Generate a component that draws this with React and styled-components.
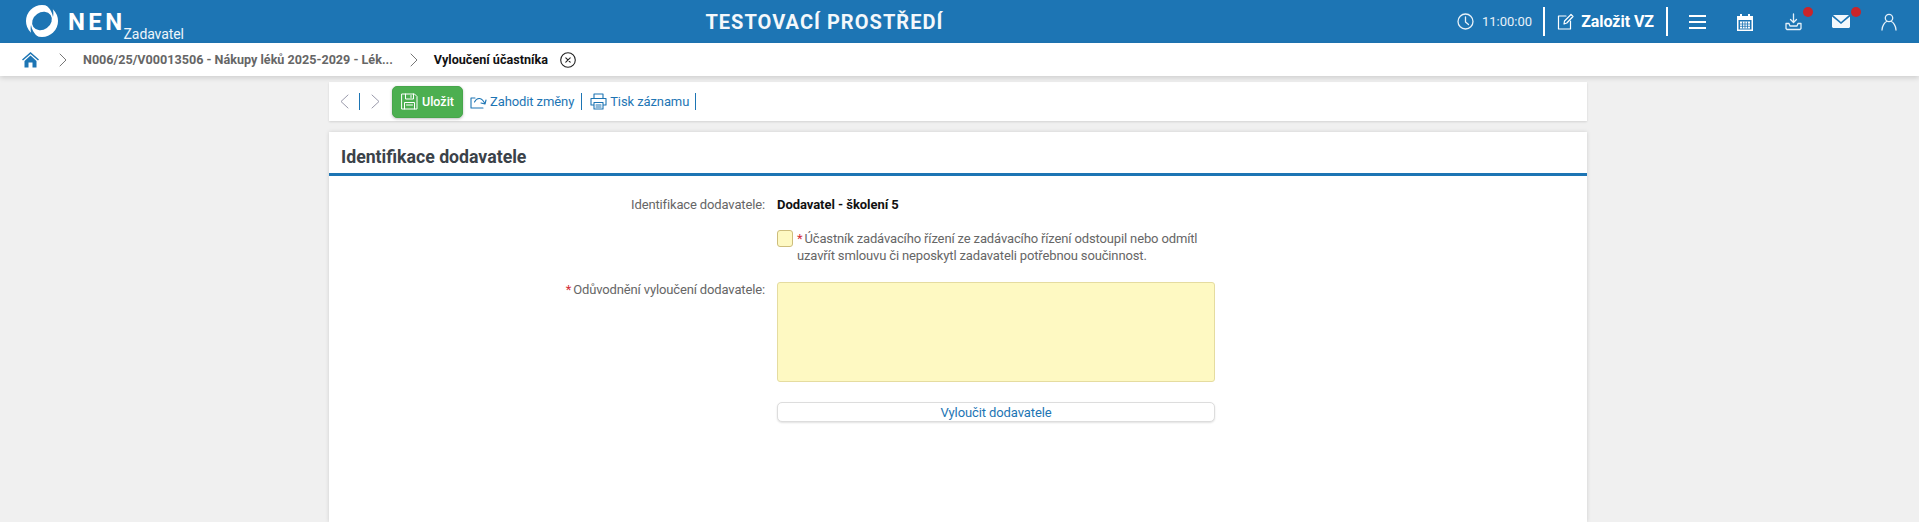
import React from "react";
import styled, { createGlobalStyle } from "styled-components";

const Global = createGlobalStyle`
  html, body { margin: 0; padding: 0; height: 100%; overflow: hidden; background: #f0f0f0; }
  body { font-family: Roboto, "Liberation Sans", sans-serif; font-size: 13px; color: #555; }
  * { box-sizing: border-box; }
`;

const Page = styled.div`display: flex; flex-direction: column; height: 522px; overflow: hidden;`;

const Header = styled.header`
  height: 43px; background: #1d75b4; color: #fff; display: flex; align-items: center;
`;
const Brand = styled.div`display: flex; align-items: flex-start; padding-left: 25px; height: 43px; flex: none;`;
const LogoMark = styled.svg`width: 33px; height: 33px; margin-top: 4px; flex: none;`;
const BrandName = styled.span`
  font-size: 24px; font-weight: 700; letter-spacing: 3.4px; line-height: 26px; margin: 9px 0 0 10px;
`;
const BrandRole = styled.span`font-size: 14px; letter-spacing: -.1px; line-height: 16px; margin: 26px 0 0 -2px; color: #eef5fb;`;
const EnvTitle = styled.div`flex: 1; padding-left: 8px; text-align: center; font-size: 20px; font-weight: 700; letter-spacing: 1.04px; color: #f4f8fb;`;
const HeaderTools = styled.div`display: flex; align-items: center; height: 43px; padding-right: 6px; flex: none;`;
const Clock = styled.div`
  display: flex; align-items: center; gap: 8px; font-size: 13px; padding-right: 11px; height: 29px;
  border-right: 2px solid #fff; color: #e8f1f8;
`;
const Found = styled.div`
  display: flex; align-items: center; gap: 7px; font-size: 16px; font-weight: 700; letter-spacing: -.05px; height: 29px;
  padding: 0 12px 0 12px; margin-right: 5px; border-right: 2px solid #fff;
`;
const ToolIcon = styled.div`
  position: relative; width: 48px; height: 24px; display: flex; align-items: center; justify-content: center;
`;
const Dot = styled.span`
  position: absolute; top: -3px; left: 34px; width: 10px; height: 10px; border-radius: 50%; background: #c9252b;
`;

const Crumbs = styled.nav`
  height: 33px; background: #fff; display: flex; align-items: center; padding-left: 22px;
  box-shadow: 0 2px 5px rgba(0,0,0,.14); position: relative; z-index: 2;
`;
const HomeGap = styled.span`width: 19px;`;
const CrumbLink = styled.span`font-size: 12.6px; font-weight: 700; color: #666; margin: 0 16px 0 15px;`;
const CrumbCurrent = styled.span`font-size: 12.6px; font-weight: 700; color: #111; margin: 0 12px 0 15px;`;
const Chevron = styled.svg`width: 10px; height: 14px; flex: none; color: #777;`;

const Main = styled.main`width: 1258px; margin: 6px 0 0 329px; display: flex; flex-direction: column; gap: 11px; flex: 1;`;
const Toolbar = styled.div`
  height: 39px; background: #fff; display: flex; align-items: center; padding-left: 11px;
  box-shadow: 0 1px 2px rgba(0,0,0,.12);
`;
const NavArrow = styled.div`width: 10px; height: 16px; display: flex; align-items: center; margin-left: ${p => p.$ml || 0};`;
const Sep = styled.span`width: 1px; height: 17px; background: #1d75b4; margin: ${p => p.$m || "0 8px"};`;
const SaveButton = styled.button`
  height: 32px; width: 71px; margin: 0 7px 0 -1px; background: #4caf50; color: #fff; border: 1px solid #47a64b; border-radius: 5px;
  display: flex; align-items: center; gap: 4px; padding: 0 0 0 8px; position: relative;
  font: 500 12.5px Roboto, sans-serif; box-shadow: 0 1px 3px rgba(0,0,0,.25);
`;
const ToolAction = styled.span`display: flex; align-items: center; gap: 3px; color: #1d75b4; font-size: 13px; letter-spacing: -.1px;`;

const Card = styled.section`background: #fff; flex: 1; box-shadow: 0 0 4px rgba(0,0,0,.14);`;
const CardTitle = styled.h2`
  margin: 0; height: 44px; padding: 12px 0 0 12px; border-bottom: 3px solid #1d75b4;
  font-size: 17.7px; font-weight: 700; line-height: 26px; color: #3b4249;
`;
const Form = styled.div`
  display: grid; grid-template-columns: 436px 438px; column-gap: 12px; padding-top: 21px;
`;
const Label = styled.div`text-align: right; color: #666; font-size: 13px; letter-spacing: -.14px; line-height: 16px; margin-top: ${p => p.$mt || 0};`;
const Req = styled.span`color: #d32f3a; margin-right: 2px;`;
const Value = styled.div`font-weight: 700; font-size: 13px; color: #111; line-height: 16px; letter-spacing: -.05px;`;
const CheckRow = styled.div`display: flex; margin-top: 17px; grid-column: 2; line-height: 17px; color: #666; font-size: 13px; letter-spacing: -.14px;`;
const CheckText = styled.span`width: 420px; flex: none;`;
const CheckBox = styled.span`
  width: 16px; height: 17px; flex: none; margin: 0 4px 0 0; border: 1px solid #cdbd7c; border-radius: 3px; background: #fef9c3;
`;
const Memo = styled.div`
  height: 100px; margin-top: 18px; border: 1px solid #e5dca0; border-radius: 3px; background: #fef9c2;
`;
const WideButton = styled.button`
  grid-column: 2; height: 20px; margin-top: 20px; background: #fff; color: #1d75b4; border: 1px solid #ddd; border-radius: 5px;
  font: 400 13px Roboto, sans-serif; letter-spacing: -.1px; padding: 0; box-shadow: 0 1px 2px rgba(0,0,0,.12);
`;
const RowSpacer = styled.div`height: 0; grid-column: 1;`;

const stroke = { fill: "none", stroke: "currentColor", strokeLinecap: "round", strokeLinejoin: "round" };
const ChevronIcon = () => <Chevron viewBox="0 0 10 14"><path {...stroke} strokeWidth="1" d="M2 1l6 6-6 6" /></Chevron>;

export default function App() {
  return (
    <Page>
      <Global />
      <Header>
        <Brand>
          <LogoMark viewBox="0 0 33 33">
            <circle cx="17" cy="17" r="16" fill="#fff" />
            <ellipse cx="17" cy="17" rx="10.500" ry="8.500" fill="#1d75b4" transform="rotate(-35 17 17)" />
            <path fill="#1d75b4" d="M18-1c6 4 9 8 10 14 1-5 0-10-3-14z" />
            <path fill="#1d75b4" d="M16 35c-6-4-9-8-10-14-1 5 0 10 3 14z" />
          </LogoMark>
          <BrandName>NEN</BrandName>
          <BrandRole>Zadavatel</BrandRole>
        </Brand>
        <EnvTitle>TESTOVACÍ PROSTŘEDÍ</EnvTitle>
        <HeaderTools>
          <Clock>
            <svg width="17" height="17" viewBox="0 0 17 17"><g {...stroke} strokeWidth="1.3"><circle cx="8.500" cy="8.500" r="7.500" /><path d="M8.500 4v5l3 2.500" /></g></svg>
            11:00:00
          </Clock>
          <Found>
            <svg width="17" height="17" viewBox="0 0 17 17"><g {...stroke} strokeWidth="1.2"><path d="M9 3H1.500v13h12V8" /><path d="M7 11l.5-3L14 1.500l2 2L9.800 10z" /></g></svg>
            Založit VZ
          </Found>
          <ToolIcon>
            <svg width="17" height="14" viewBox="0 0 17 14"><path fill="#fff" d="M0 0h17v2H0zM0 6h17v2H0zM0 12h17v2H0z" /></svg>
          </ToolIcon>
          <ToolIcon>
            <svg width="18" height="18" viewBox="0 0 18 18"><path fill="#fff" fillRule="evenodd" d="M1 3h3V1h2v2h6V1h2v2h3v15H1zm1.500 4v9.500h13V7zM4 8.500h10v7H4z" /><path stroke="#1d75b4" strokeWidth=".8" d="M6.500 8.500v7M9 8.500v7M11.500 8.500v7M4 11h10M4 13.300h10" /></svg>
          </ToolIcon>
          <ToolIcon>
            <svg width="17" height="18" viewBox="0 0 17 18"><g {...stroke} stroke="#e4f0f9" strokeWidth="1.300"><path d="M8.500 1v8M5.500 6.500l3 3 3-3" /><path d="M4 10.500H1v5l1 1h13l1-1v-5h-3l-1 2.500H5z" /></g></svg>
            <Dot />
          </ToolIcon>
          <ToolIcon>
            <svg width="18" height="13" viewBox="0 0 18 13"><path fill="#f3f8fc" d="M1 0h16L9 7zM0 1.500V12l1 1h16l1-1V1.500L9 9z" /></svg>
            <Dot />
          </ToolIcon>
          <ToolIcon>
            <svg width="16" height="18" viewBox="0 0 16 18"><g {...stroke} stroke="#e4f0f9" strokeWidth="1.300"><circle cx="8" cy="5" r="3.700" /><path d="M1 17c0-4 3-8 4.700-8.500M15 17c0-4-3-8-4.700-8.500" /></g></svg>
          </ToolIcon>
        </HeaderTools>
      </Header>

      <Crumbs>
        <svg width="17" height="17" viewBox="0 0 17 17"><path fill="#1d75b4" d="M8.500 1L0 8.500l1 1L8.500 3l7.500 6.500 1-1zM2.500 10L8.500 4.500 14.500 10v6.500H10.500V11.500h-4v5H2.500z" /></svg>
        <HomeGap />
        <ChevronIcon />
        <CrumbLink>N006/25/V00013506 - Nákupy léků 2025-2029 - Lék...</CrumbLink>
        <ChevronIcon />
        <CrumbCurrent>Vyloučení účastníka</CrumbCurrent>
        <svg width="16" height="16" viewBox="0 0 16 16"><g {...stroke} stroke="#222" strokeWidth="1.100"><circle cx="8" cy="8" r="7.300" /><path d="M5.800 5.800l4.400 4.400M10.200 5.800l-4.400 4.400" /></g></svg>
      </Crumbs>

      <Main>
        <Toolbar>
          <NavArrow><svg width="9" height="15" viewBox="0 0 9 15"><path {...stroke} stroke="#99a" d="M8 1L1 7.500 8 14" /></svg></NavArrow>
          <Sep $m="0 0 0 9px" />
          <NavArrow $ml="11px"><svg width="9" height="15" viewBox="0 0 9 15"><path {...stroke} stroke="#99a" d="M1 1l7 6.500L1 14" /></svg></NavArrow>
          <Sep $m="0 0 0 11px" />
          <SaveButton>
            <svg width="17" height="17" viewBox="0 0 17 17"><g {...stroke} strokeWidth="1"><path d="M1 1h12.500L16 3.500V16H1z" /><path d="M4.500 1v5h8V1M10 2.500V4.500M3.500 16V9.500h10V16M5.500 12h6" /></g></svg>
            Uložit
          </SaveButton>
          <ToolAction>
            <svg width="17" height="14" viewBox="0 0 17 14"><g {...stroke} strokeWidth="1.100"><path d="M5 3H1v10h12" /><path d="M4.500 7C7 2 12 2 15 9M16 5l-1 4-4-1" /></g></svg>
            Zahodit změny
          </ToolAction>
          <Sep $m="0 8px 0 7px" />
          <ToolAction>
            <svg width="17" height="17" viewBox="0 0 17 17"><g {...stroke} strokeWidth="1.100"><path d="M4 5V1h9v4M4 12H1V5.500h15V12h-3M4 9.500h9V16H4zM6 12h5M6 14h5" /></g></svg>
            Tisk záznamu
          </ToolAction>
          <Sep $m="0 0 0 6px" />
        </Toolbar>
        <Card>
          <CardTitle>Identifikace dodavatele</CardTitle>
          <Form>
            <Label>Identifikace dodavatele:</Label>
            <Value>Dodavatel - školení 5</Value>
            <RowSpacer />
            <CheckRow>
              <CheckBox />
              <CheckText><Req>*</Req>Účastník zadávacího řízení ze zadávacího řízení odstoupil nebo odmítl<br />uzavřít smlouvu či neposkytl zadavateli potřebnou součinnost.</CheckText>
            </CheckRow>
            <Label $mt="18px"><Req>*</Req>Odůvodnění vyloučení dodavatele:</Label>
            <Memo />
            <RowSpacer />
            <WideButton>Vyloučit dodavatele</WideButton>
          </Form>
        </Card>
      </Main>
    </Page>
  );
}
